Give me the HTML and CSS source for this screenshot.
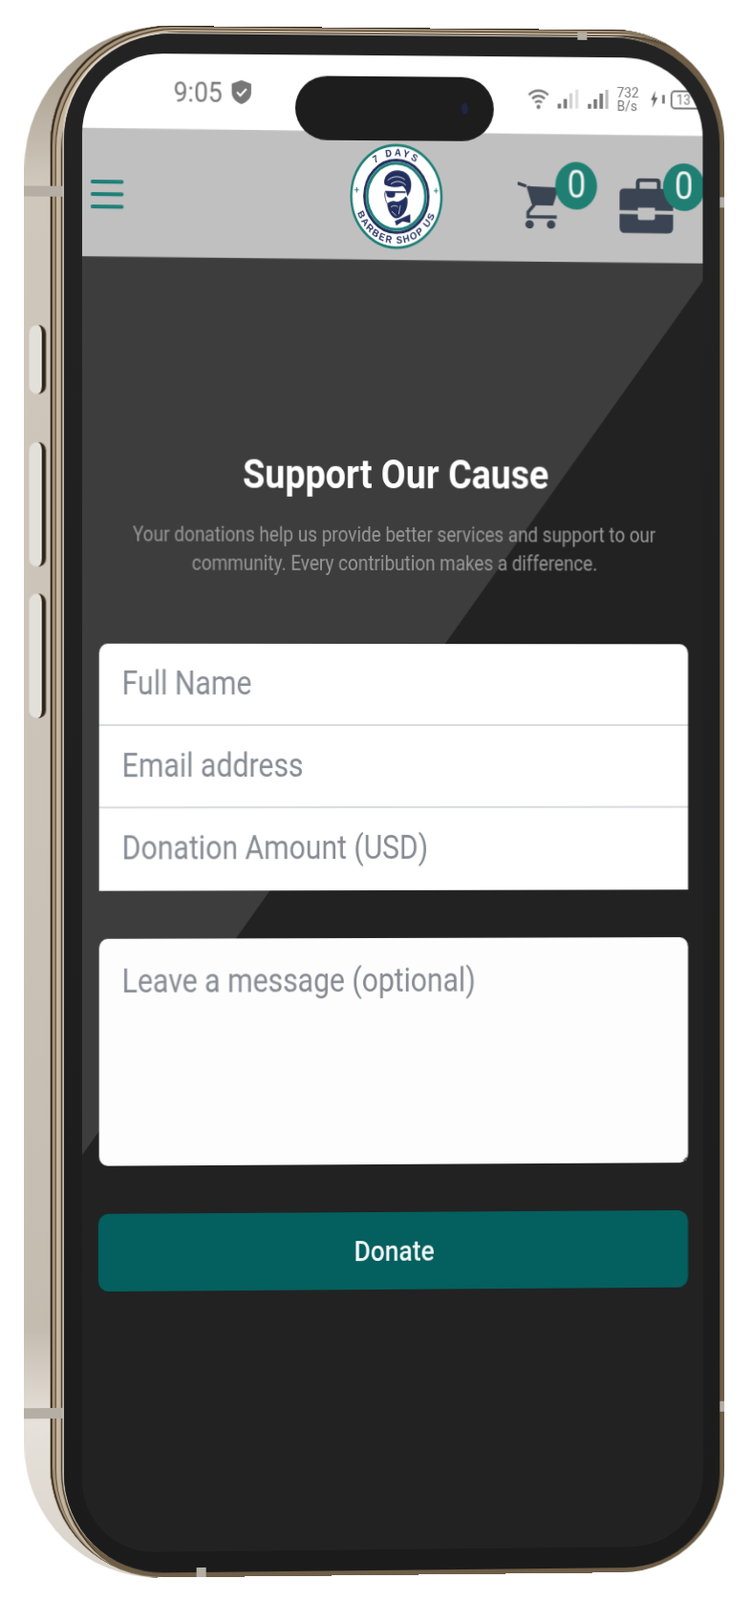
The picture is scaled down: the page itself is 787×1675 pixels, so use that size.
FILE: index.html
```html
<!DOCTYPE html>
<html lang="en">
<head>
<meta charset="utf-8">
<title>Support Our Cause</title>
<link rel="stylesheet" href="styles.css">
</head>
<body>
<div class="phone">
  <span class="side-btn btn-mute"></span>
  <span class="side-btn btn-up"></span>
  <span class="side-btn btn-down"></span>
  <div class="rim">
    <div class="bezel">
      <div class="screen">
        <div class="app">
          <div class="statusbar">
            <span class="time">9:05</span>
            <svg class="shield" viewBox="0 0 26 28"><path d="M13 1 L25 5 V14 C25 21 19 25 13 27 C7 25 1 21 1 14 V5 Z" fill="#777"/><path d="M7.5 14 L11.5 18 L19 10.5" fill="none" stroke="#fff" stroke-width="2.2"/></svg>
            <div class="status-right">
              <svg class="wifi" viewBox="0 0 26 22"><g fill="none" stroke="#777" stroke-width="2.4"><path d="M1.5 7 C8 1 18 1 24.5 7"/><path d="M5.5 11 C10 7 16 7 20.5 11"/><path d="M9 15 C11.5 13 14.5 13 17 15"/></g><circle cx="13" cy="19.5" r="2.2" fill="#777"/></svg>
              <svg class="signal" viewBox="0 0 27 22"><rect x="1" y="16" width="4" height="5" fill="#777"/><rect x="8" y="11" width="4" height="10" fill="#777"/><rect x="15" y="5" width="3.5" height="16" fill="#ccc"/><rect x="22" y="1" width="3.5" height="20" fill="#ddd"/></svg>
              <svg class="signal" viewBox="0 0 27 22"><rect x="1" y="16" width="4" height="5" fill="#777"/><rect x="8" y="11" width="4" height="10" fill="#777"/><rect x="15" y="5" width="4" height="16" fill="#777"/><rect x="22" y="1" width="3.5" height="20" fill="#bbb"/></svg>
              <div class="netspeed"><span>732</span><span>B/s</span></div>
              <svg class="bolt" viewBox="0 0 10 20"><path d="M6.5 0 L0.5 11 H4 L2.5 20 L9.5 8 H5.5 Z" fill="#666"/></svg>
              <span class="batt-cap"></span>
              <span class="battery">13</span>
            </div>
          </div>
          <header class="topbar">
            <div class="burger"><span></span><span></span><span></span></div>
            <svg class="logo" viewBox="0 0 120 120">
              <defs>
                <path id="arcTop" d="M14 60 A46 46 0 0 1 106 60"/>
                <path id="arcBottom" d="M6.5 60 A53.5 53.5 0 0 0 113.5 60"/>
              </defs>
              <circle cx="60" cy="60" r="58" fill="#fff" stroke="#1f7f78" stroke-width="3"/>
              <circle cx="60" cy="60" r="41" fill="#fff" stroke="#232f5e" stroke-width="3.2"/>
              <circle cx="60" cy="60" r="37.5" fill="#fff" stroke="#1f7f78" stroke-width="3.4"/>
              <text class="logo-text logo-top"><textPath href="#arcTop" startOffset="50%">7 DAYS</textPath></text>
              <text class="logo-text logo-bottom"><textPath href="#arcBottom" startOffset="50%">BARBER SHOP US</textPath></text>
              <path d="M6 53 H12 M9 50 V56 M108 53 H114 M111 50 V56" stroke="#1f7f78" stroke-width="1.2"/>
              <path d="M45 47 C42 36 54 29 66 31 C76 32 82 42 78 54 L74 60 C73 54 72 51 68 48 C60 50 52 50 45 47Z" fill="#232f5e"/>
              <path d="M49 42 C55 37 64 36 71 41 M53 46 C59 42 66 42 72 47" fill="none" stroke="#fff" stroke-width=".9"/>
              <path d="M46 54 H59 L58 60 C56 62 50 62 48 60Z M59 54 H72 V56 H59Z" fill="#232f5e"/>
              <path d="M46 54 C44 58 46 65 48 68" fill="none" stroke="#232f5e" stroke-width="1"/>
              <path d="M48 68 C52 66 56 64 60 66 C64 66 68 64 72 60 L74 62 C76 72 70 84 60 85 C53 84 49 76 48 68Z" fill="#232f5e"/>
              <path d="M53 72 C56 70 60 70 62 72 M54 77 L60 82 M65 70 L63 80" fill="none" stroke="#fff" stroke-width=".8"/>
              <path d="M58 88 L66 85 L78 80 L78 90 L68 88 L60 93Z" fill="#232f5e"/>
            </svg>
            <div class="top-icons">
              <div class="icon-wrap cart-wrap">
                <svg class="cart" viewBox="0 0 42 50" preserveAspectRatio="none"><path d="M0 2 L9 5" stroke="#3a4452" stroke-width="3.4" fill="none"/><path d="M10 5 L43 6 L37 25 H16 Z" fill="#3a4452"/><path d="M11 5 L17 25 L11 32 V37 H41" stroke="#3a4452" stroke-width="3.4" fill="none"/><circle cx="12.5" cy="45" r="4.4" fill="#3a4452"/><circle cx="35" cy="45" r="4.4" fill="#3a4452"/></svg>
                <span class="badge">0</span>
              </div>
              <div class="icon-wrap case-wrap">
                <svg class="case" viewBox="0 0 56 58" preserveAspectRatio="none"><path d="M19 12 V5 Q19 2 22 2 H38 Q41 2 41 5 V12" fill="none" stroke="#3a4452" stroke-width="4"/><path d="M5 11 H51 Q56 11 56 16 V34 H37 V31 H19 V34 H0 V16 Q0 11 5 11Z" fill="#3a4452"/><path d="M0 38 H19 V42 Q19 44 21 44 H35 Q37 44 37 42 V38 H56 V52 Q56 58 50 58 H6 Q0 58 0 52Z" fill="#3a4452"/></svg>
                <span class="badge">0</span>
              </div>
            </div>
          </header>
          <main class="content">
            <h1 class="title">Support Our Cause</h1>
            <p class="lead">Your donations help us provide better services and support to our community. Every contribution makes a difference.</p>
            <div class="field-group">
              <div class="field">Full Name</div>
              <div class="field">Email address</div>
              <div class="field">Donation Amount (USD)</div>
            </div>
            <div class="message">Leave a message (optional)</div>
            <div class="donate">Donate</div>
          </main>
        </div>
      </div>
    </div>
  </div>
  <div class="island"><span class="camera"></span></div>
  <span class="band band-l1"></span>
  <span class="band band-l2"></span>
  <span class="band band-r1"></span>
  <span class="band band-r2"></span>
  <span class="band band-t"></span>
  <span class="band band-b"></span>
</div>
</body>
</html>
```
FILE: styles.css
```css
* { box-sizing: border-box; }
html, body { margin: 0; padding: 0; background: #fff; }
body { width: 787px; height: 1675px; overflow: hidden; font-family: Roboto, "Liberation Sans", sans-serif; }

.phone {
  position: relative;
  display: flex;
  width: 733px;
  height: 1620px;
  margin: 29px 0 0 27px;
  padding-left: 27px;
  border-radius: 150px 120px 110px 140px;
  background: linear-gradient(180deg, #9d9282 0, #cfc7bb 10%, #cbc3b8 50%, #c5bcb0 84%, #e6e1da 90%, #d8d2c9 100%);
  transform: perspective(2000px) rotateY(1.4deg);
  transform-origin: 366px 722px;
}
.rim {
  flex: 1;
  min-width: 0;
  display: flex;
  padding: 8px 5px 5px 14px;
  border-radius: 125px 118px 108px 118px;
  background: #6e5d46;
  box-shadow: inset 2px 1px 0 #33271a, inset 5px 3px 0 #a8967c, inset 6px 4px 0 #4a3a28, inset 11px 6px 0 #c4b59e, inset 14px 8px 0 #3e3022;
}
.bezel {
  flex: 1;
  min-width: 0;
  display: flex;
  padding: 21px 18px 22px 19px;
  border-radius: 112px 112px 100px 104px;
  background: linear-gradient(180deg, #232323, #1b1b1b);
  box-shadow: -1.5px -1px 0 #e6dfd4;
}
.screen {
  flex: 1;
  min-width: 0;
  position: relative;
  overflow: hidden;
  border-radius: 84px 84px 76px 76px;
  background: #222;
}
.app {
  width: 740px;
  height: 100%;
  display: flex;
  flex-direction: column;
  transform: scaleX(.88);
  transform-origin: 0 0;
  filter: blur(.35px);
}

.statusbar {
  flex: none;
  display: flex;
  align-items: center;
  height: 78px;
  padding-left: 108px;
  background: #fff;
  color: #777;
}
.time { font-size: 30px; line-height: 1; margin-top: 2px; }
.shield { width: 27px; height: 27px; margin-left: 9px; margin-top: 0; flex: none; }
.status-right { flex: none; display: flex; align-items: center; gap: 9px; margin-left: 327px; margin-top: 9px; }
.wifi { width: 26px; height: 22px; }
.signal { width: 27px; height: 22px; }
.netspeed { display: flex; flex-direction: column; font-size: 15.5px; line-height: 14px; }
.bolt { width: 9px; height: 19px; margin-left: 5px; }
.batt-cap { width: 3px; height: 9px; margin-left: -4px; background: #777; }
.battery {
  width: 52px; height: 20px; margin-left: -2px;
  border: 2px solid #777; border-radius: 5px;
  font-size: 15px; line-height: 16px; padding-left: 5px;
}

.topbar {
  flex: none;
  display: grid;
  grid-template-columns: 1fr auto 1fr;
  align-items: center;
  height: 134px;
  padding-left: 10px;
  background: #c0c0c0;
  box-shadow: 0 -6px 0 #fff;
  transform: skewY(.3deg);
  transform-origin: 0 0;
}
.burger { display: flex; flex-direction: column; gap: 9.5px; width: 39px; margin-top: 4px; }
.burger span { height: 3.5px; border-radius: 2px; background: #1f7f78; }
.logo { width: 111px; height: 111px; margin-top: 1px; margin-left: -5px; }
.logo-text { font-family: "Liberation Sans", sans-serif; font-weight: 700; fill: #232f5e; text-anchor: middle; }
.logo-top { font-size: 11.5px; letter-spacing: 3px; }
.logo-bottom { font-size: 11.5px; letter-spacing: 1.8px; }

.top-icons { display: flex; padding-left: 89.4px; }
.icon-wrap { position: relative; flex: none; }
.cart-wrap { width: 121.6px; margin-top: 19px; }
.case-wrap { width: 64px; margin-top: 14px; }
.cart { display: block; width: 48px; height: 50px; }
.case { display: block; width: 64px; height: 58px; }
.badge {
  position: absolute;
  width: 50px; height: 50px;
  border-radius: 50%;
  background: #1f7f73;
  color: #f1f1f1;
  font-size: 40px;
  line-height: 48px;
  text-align: center;
}
.cart-wrap .badge { left: 45px; top: -21px; }
.case-wrap .badge { left: 52px; top: -16px; }

.content {
  flex: 1;
  display: flex;
  flex-direction: column;
  padding: 202px 19px 0 20px;
  background-color: #222;
  background-image: linear-gradient(to bottom right, #3d3d3d 50%, #222 50.05%);
  background-size: 756px 937px;
  background-repeat: no-repeat;
}
.title { margin: 0 0 25px 3px; color: #fff; font-size: 42.8px; line-height: 48px; font-weight: 700; text-align: center; }
.lead { margin: 0 auto 69px; width: 640px; padding-left: 1px; color: #999; font-size: 21.5px; line-height: 30px; text-align: center; }

.field-group { display: flex; flex-direction: column; border-radius: 10px 10px 0 0; overflow: hidden; background: #fff; }
.field {
  height: 86px;
  padding-left: 27px;
  color: #878c94;
  font-size: 34.2px;
  line-height: 82px;
  border-bottom: 2px solid #d8dce0;
}
.field:last-child { border-bottom: 0; }
.message {
  position: relative;
  height: 237px;
  margin-top: 50px;
  padding: 20px 27px;
  border-radius: 10px;
  background: #fdfdfd;
  color: #878c94;
  font-size: 34.2px;
  line-height: 48px;
}
.message::after {
  content: "";
  position: absolute;
  right: 2px; bottom: 2px;
  width: 5px; height: 5px;
  background: linear-gradient(135deg, transparent 50%, #777 50%);
}
.donate {
  height: 81px;
  margin-top: 50px;
  margin-left: -1px;
  border-radius: 12px;
  background: #045f5f;
  color: #f2f7f6;
  font-size: 30px;
  font-weight: 500;
  line-height: 81px;
  text-align: center;
}

.island {
  position: absolute;
  left: 282px; top: 51px;
  width: 208px; height: 67px;
  border-radius: 34px;
  background: #1d1d1d;
}
.camera {
  position: absolute;
  right: 27px; top: 27px;
  width: 7px; height: 12px;
  border-radius: 50%;
  background: #1e2546;
}
.band { position: absolute; background: #b5aea4; }
.band-l1 { left: 0; top: 168px; width: 40px; height: 11px; }
.band-l2 { left: 0; top: 1442px; width: 40px; height: 11px; }
.band-r1 { right: 0; top: 175px; width: 5px; height: 11px; }
.band-r2 { right: 0; top: 1441px; width: 5px; height: 11px; }
.band-t { left: 578px; top: 3px; width: 10px; height: 8px; }
.band-b { left: 179px; bottom: 0; width: 10px; height: 10px; }

.side-btn {
  position: absolute;
  left: 5px;
  width: 17px;
  border-radius: 9px;
  background: #e3dfd9;
  border-right: 4px solid #2f261c;
  box-shadow: 1px 0 0 #8a7a62, inset -1px 0 0 #fff;
}
.btn-mute { top: 313px; height: 72px; }
.btn-up { top: 435px; height: 130px; }
.btn-down { top: 593px; height: 130px; }
```
